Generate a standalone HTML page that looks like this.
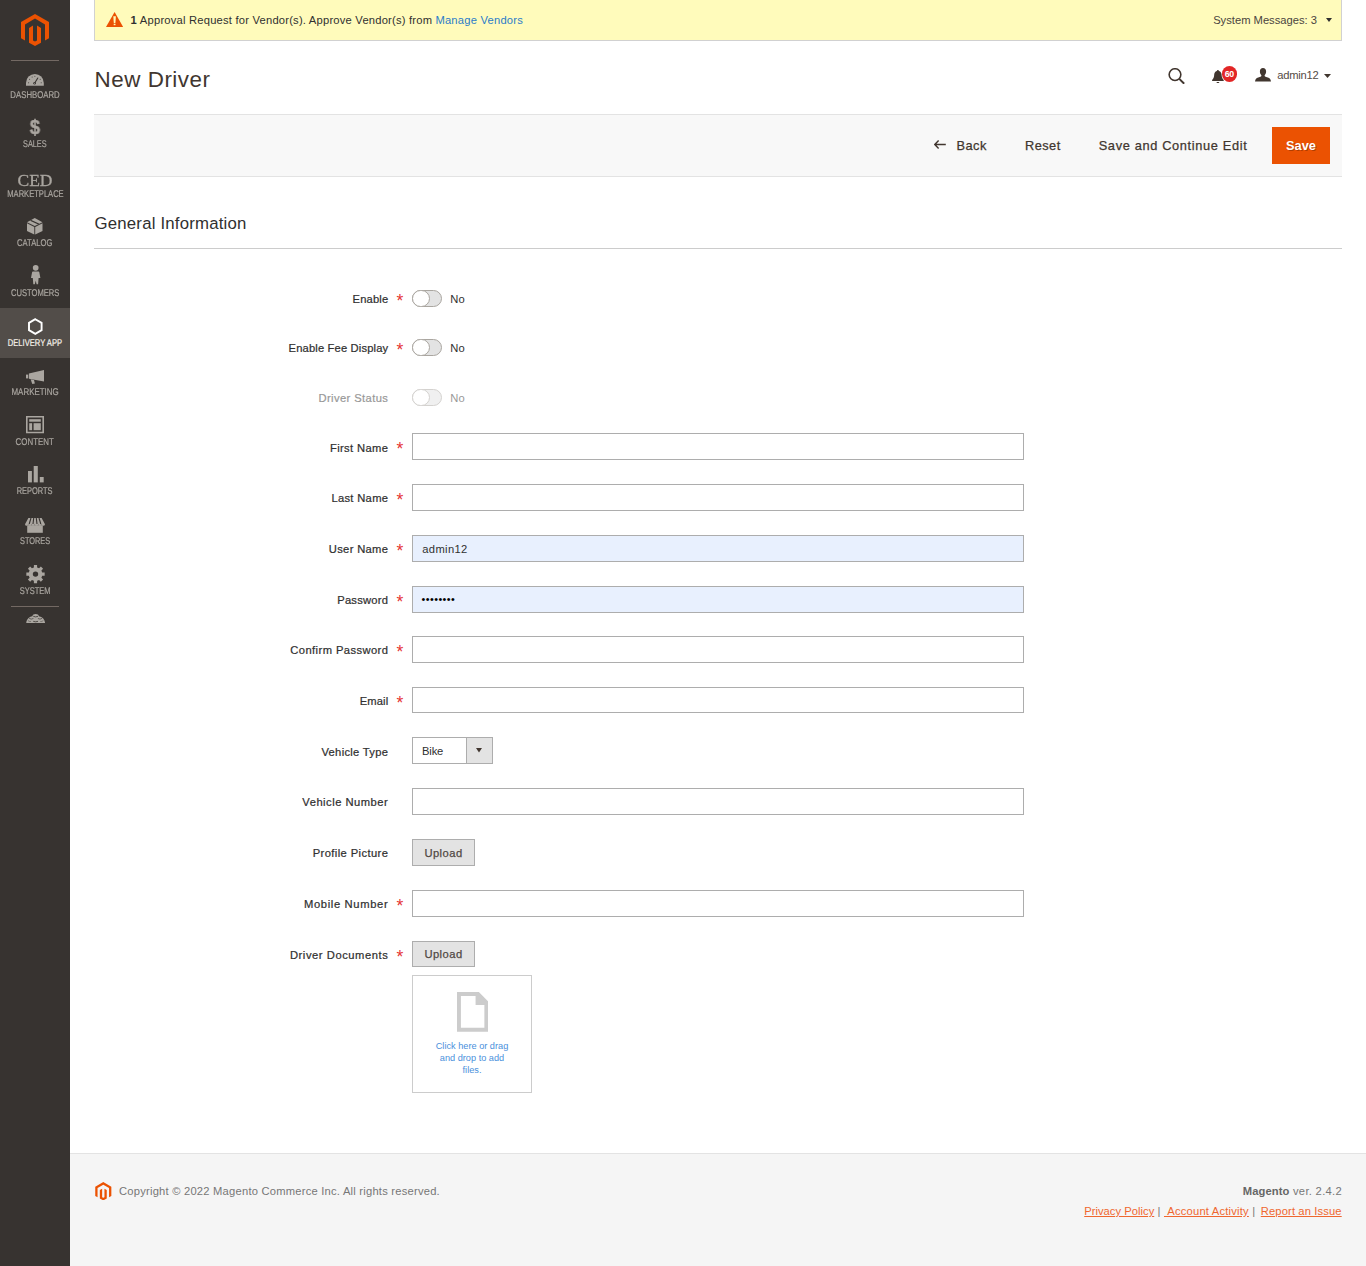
<!DOCTYPE html>
<html lang="en">
<head>
<meta charset="utf-8">
<title>New Driver / Magento Admin</title>
<style>
*{box-sizing:border-box;margin:0;padding:0}
html,body{width:1366px;height:1266px;overflow:hidden;background:#fff}
body{font-family:"Liberation Sans",sans-serif;font-size:11.2px;color:#303030;position:relative}
a{text-decoration:none;color:inherit}
.abs{position:absolute}
.t{position:absolute;white-space:nowrap;line-height:1}

/* ---------- sidebar ---------- */
#side{position:absolute;left:0;top:0;width:70px;height:1266px;background:#373330}
#side .sep{position:absolute;left:11px;width:48px;height:1px;background:#736963}
#side .item{position:absolute;left:0;width:70px;height:49.6px;color:#aaa6a0}
#side .item.active{background:#524d49;color:#f7f3eb}
#side .item svg{position:absolute;overflow:visible}
#side .lbl{position:absolute;left:-15px;width:100px;text-align:center;font-size:9.8px;line-height:10px;letter-spacing:0;white-space:nowrap;top:30.1px;-webkit-text-stroke:.2px currentColor}
#side .item:not(.active) .lbl{will-change:transform}
#side .lbl span{display:inline-block;transform-origin:50% 85%}

/* ---------- message bar ---------- */
#msg{position:absolute;left:94px;top:-1px;width:1248px;height:42px;background:#fffbbb;border:1px solid #d1d1d1}

/* ---------- header ---------- */
#title{left:94.6px;top:67px;font-size:22.4px;line-height:26px;color:#41362f;letter-spacing:.52px}

/* ---------- action bar ---------- */
#actions{position:absolute;left:94px;top:114px;width:1248px;height:63px;background:#f8f8f8;border-top:1px solid #e3e3e3;border-bottom:1px solid #e3e3e3}
.btn{position:absolute;font-size:12.8px;line-height:15px;color:#41362f;white-space:nowrap;-webkit-text-stroke:.25px currentColor}
#save{position:absolute;left:1272px;top:127.3px;width:58px;height:36.6px;background:#eb5202}
#save span{position:absolute;left:0;width:58px;text-align:center;top:10.5px;font-size:12.8px;line-height:15px;color:#fff;font-weight:bold;text-shadow:1px 1px 0 rgba(0,0,0,.25)}

/* ---------- section ---------- */
#sect{left:94.5px;top:214px;font-size:16.8px;line-height:20px;color:#303030;letter-spacing:.2px}
#sectline{position:absolute;left:94px;top:248px;width:1248px;height:1px;background:#ccc}

/* ---------- form ---------- */
.lab{position:absolute;right:978px;white-space:nowrap;font-size:11.2px;line-height:14px;color:#303030;-webkit-text-stroke:.22px currentColor;margin-right:-.3px}
.req{position:absolute;left:396.4px;font-size:17.5px;line-height:14px;height:14px;color:#e53434;margin-top:-.5px}
.inp{position:absolute;left:412px;width:612px;height:27px;border:1px solid #adadad;background:#fff}
.inp.fill{background:#e8f0fe}
.inp span{position:absolute;left:9.3px;top:6.5px;font-size:11.2px;line-height:14px;color:#303030;letter-spacing:.35px}
.tog{position:absolute;left:412px;width:30px;height:17px;border-radius:9px;background:#e3e3e3;border:1px solid #aaa6a0}
.tog i{position:absolute;left:-1px;top:-1px;width:18px;height:17px;border-radius:8.5px;background:#fff;border:1px solid #aaa6a0}
.no{position:absolute;left:450.2px;font-size:11.2px;line-height:14px;color:#303030;letter-spacing:.3px}
.dis{opacity:.5}
.upl{position:absolute;left:412px;width:63px;height:27px;background:#e3e3e3;border:1px solid #adadad}
.upl span{position:absolute;left:0;width:61px;text-align:center;top:6px;font-size:11.2px;line-height:14px;color:#514943;-webkit-text-stroke:.25px currentColor;letter-spacing:.45px}


.sel{position:absolute;left:412px;width:81px;height:27px;border:1px solid #adadad;background:#fff}
.sel span{position:absolute;left:9px;top:6.1px;font-size:11.2px;line-height:14px;color:#303030;letter-spacing:-.15px}
.sel b{position:absolute;right:0;top:0;width:26.5px;height:25px;background:#e3e3e3;border-left:1px solid #adadad}
.sel svg{position:absolute;left:62.6px;top:10.3px}
.inp span.pw{letter-spacing:.44px;font-size:10.8px;color:#000;left:8.5px;margin-top:-1.4px}
#drop{position:absolute;left:412px;top:975px;width:120px;height:118px;border:1px solid #ccc;background:#fff}
#droptxt{position:absolute;left:0;width:118px;top:64px;text-align:center;font-size:9.2px;line-height:12px;color:#4a90dc;letter-spacing:0}
/* ---------- footer ---------- */
#links a{color:#ef672f;text-decoration:underline}
#foot{position:absolute;left:70px;top:1153px;width:1296px;height:113px;background:#f5f5f5;border-top:1px solid #e3e3e3}
</style>
</head>
<body>

<div id="side">
  <svg class="abs" style="left:21px;top:14px" width="28" height="32" viewBox="0 0 28 32"><path fill="#eb5202" d="M14 0 0 8.1v16.1l4 2.3V10.4l10-5.8 10 5.8v16.1l4-2.3V8.1z"/><path fill="#eb5202" d="M16 26.400l-2 1.200-2-1.200V11.600l-4 2.300v14.800L14 32l6-3.300V13.900l-4-2.300z"/></svg>
  <div class="sep" style="top:60px"></div>

  <div class="item" style="top:60px">
    <svg style="left:26px;top:14px" width="18" height="12" viewBox="0 0 18 12"><path fill="#aaa6a0" d="M0 11.8V8.9a8.9 8.9 0 0 1 17.800 0v2.900z"/><path d="M8.600 9.300 11.800 4" stroke="#373330" stroke-width="1.100" stroke-linecap="round"/><circle cx="8.600" cy="9.300" r="1.300" fill="#373330"/><circle cx="8.600" cy="9.300" r=".5" fill="#aaa6a0"/><g fill="#373330"><circle cx="2.600" cy="8.700" r=".5"/><circle cx="3.600" cy="5.300" r=".5"/><circle cx="6.100" cy="3" r=".5"/><circle cx="8.900" cy="2.200" r=".5"/><circle cx="14.200" cy="5.300" r=".5"/><circle cx="15.200" cy="8.700" r=".5"/></g></svg>
    <div class="lbl"><span id="l0" style="transform:scaleX(0.795) rotate(.03deg)">DASHBOARD</span></div>
  </div>
  <div class="item" style="top:109.6px">
    <div class="abs" style="left:0;width:70px;top:6.500px;text-align:center;font-size:20.4px;line-height:22px;font-weight:bold;color:#aaa6a0;transform:scaleX(.9);-webkit-text-stroke:.5px #aaa6a0;will-change:transform" id="dollar">$</div>
    <div class="lbl" style="margin-top:-1px"><span id="l1" style="transform:scaleX(0.747) rotate(.03deg)">SALES</span></div>
  </div>
  <div class="item" style="top:159.2px">
    <div class="abs" style="left:0;width:70px;top:10.500px;text-align:center;font-family:'Liberation Serif',serif;font-size:17.500px;line-height:20px;color:#aaa6a0;will-change:transform;-webkit-text-stroke:.3px #aaa6a0" id="ced">CED</div>
    <div class="lbl"><span id="l2" style="transform:scaleX(0.773) rotate(.03deg)">MARKETPLACE</span></div>
  </div>
  <div class="item" style="top:208.8px">
    <svg style="left:27.300px;top:8.800px" width="15.500" height="16.600" viewBox="0 0 15.500 16.600"><g fill="#aaa6a0"><path d="M7.750 0 15.500 4.300 7.750 8 0 4.300z"/><path d="M0 5.300 7.300 8.900V16.600L0 12.900z"/><path d="M8.200 8.900 15.500 5.300V12.900L8.200 16.600z"/></g><path d="M3 2.650 4.300 1.900 12.500 5.750 11.200 6.500z" fill="#373330"/></svg>
    <div class="lbl" style="margin-top:-1px"><span id="l3" style="transform:scaleX(0.778) rotate(.03deg)">CATALOG</span></div>
  </div>
  <div class="item" style="top:258.4px">
    <svg style="left:31px;top:6.400px" width="9.400" height="19.400" viewBox="0 0 9.400 19.400"><g fill="#aaa6a0"><circle cx="4.700" cy="2.850" r="2.850"/><path d="M1.900 6.500h5.600q.7 0 .8.700L9.400 12.900H7.600L7.100 19.300H5.600L4.700 15.700 3.800 19.300H2.300L1.800 12.900H0L1.100 7.200q.1-.7.800-.7z"/></g></svg>
    <div class="lbl"><span id="l4" style="transform:scaleX(0.775) rotate(.03deg)">CUSTOMERS</span></div>
  </div>
  <div class="item active" style="top:308px">
    <svg style="left:28px;top:9.800px" width="14.600" height="17" viewBox="0 0 14.600 17"><path d="M7.300 1.200 13.600 4.850V12.150L7.300 15.800 1 12.150V4.850z" fill="none" stroke="#fff" stroke-width="1.900" stroke-linejoin="miter"/></svg>
    <div class="lbl"><span id="l5" style="transform:scaleX(0.777) rotate(.03deg)">DELIVERY APP</span></div>
  </div>
  <div class="item" style="top:357.6px">
    <svg style="left:26.300px;top:12.200px" width="18" height="14" viewBox="0 0 18 14"><g fill="#aaa6a0"><path d="M2.900 3.500 18 0V11.600L2.900 8.800z"/><path d="M0 4.600h2.200v3.800H0z"/><path d="M4.600 9.200 8 9.900 8.900 13.600 6.300 14z"/></g></svg>
    <div class="lbl" style="margin-top:-1px"><span id="l6" style="transform:scaleX(0.811) rotate(.03deg)">MARKETING</span></div>
  </div>
  <div class="item" style="top:407.2px">
    <svg style="left:26.300px;top:9px" width="18" height="17.300" viewBox="0 0 18 17.300"><path d="M.8 .8h16.400v15.700H.8z" fill="none" stroke="#aaa6a0" stroke-width="1.600"/><g fill="#aaa6a0"><path d="M3.200 3.200h11.600v2.500H3.200z"/><path d="M3.200 7.200h2.900v7H3.200z"/><path d="M7.600 7.200h7.200v7H7.600z"/></g></svg>
    <div class="lbl"><span id="l7" style="transform:scaleX(0.805) rotate(.03deg)">CONTENT</span></div>
  </div>
  <div class="item" style="top:456.8px">
    <svg style="left:27.500px;top:9.200px" width="16" height="16.400" viewBox="0 0 16 16.400"><g fill="#aaa6a0"><path d="M0 5h3.900v11.400H0z"/><path d="M5.700 0h4.100v16.400H5.700z"/><path d="M11.800 11h3.900v5.400h-3.900z"/></g></svg>
    <div class="lbl" style="margin-top:-1px"><span id="l8" style="transform:scaleX(0.76) rotate(.03deg)">REPORTS</span></div>
  </div>
  <div class="item" style="top:506.4px">
    <svg style="left:24.900px;top:11.600px" width="20" height="15" viewBox="0 0 20 15"><g fill="#aaa6a0"><path d="M3.400 0h13.200L20 6.200q-.2 1.600-1.700 1.600-1.400 0-1.700-1.500-.3 1.500-1.700 1.500t-1.700-1.500q-.3 1.500-1.700 1.500T9.800 6.300Q9.500 7.800 8.100 7.800T6.400 6.300Q6.100 7.800 4.700 7.800 3.300 7.800 3.100 6.300 2.800 7.800 1.600 7.800.2 7.800 0 6.200z"/><path d="M2.200 7.200h15.600V14.800H2.200z"/></g><g stroke="#373330" stroke-width="1.100"><path d="M6 0 4.200 6M8.700 0 8 6M11.300 0 12 6M14 0 15.800 6"/></g></svg>
    <div class="lbl"><span id="l9" style="transform:scaleX(0.752) rotate(.03deg)">STORES</span></div>
  </div>
  <div class="item" style="top:556px">
    <svg style="left:25.800px;top:8.800px" width="19" height="18.200" viewBox="0 0 19 18.200"><path fill="#aaa6a0" fill-rule="evenodd" d="M7.860 2.400 7.930-.07H11.070L11.140 2.400 13.080 3.200 14.870 1.510 17.090 3.730 15.400 5.520 16.200 7.460 18.670 7.530V10.670L16.200 10.740 15.400 12.680 17.090 14.470 14.870 16.690 13.080 15 11.140 15.800 11.070 18.270H7.930L7.860 15.800 5.920 15 4.130 16.690 1.910 14.470 3.600 12.680 2.800 10.740.33 10.670V7.530L2.800 7.460 3.600 5.520 1.910 3.730 4.130 1.510 5.920 3.200zM6.800 9.100a2.700 2.700 0 1 0 5.400 0 2.700 2.700 0 1 0-5.400 0z"/></svg>
    <div class="lbl"><span id="l10" style="transform:scaleX(0.765) rotate(.03deg)">SYSTEM</span></div>
  </div>
  <div class="sep" style="top:606px"></div>
  <svg class="abs" style="left:25.700px;top:613.600px" width="19.300" height="9.700" viewBox="0 0 19.300 9.700"><path fill="#aaa6a0" d="M.2 9.700C.2 5.800 2.600 3 6.400 2.300 6.600.9 7.800 0 9.650 0s3.050.9 3.250 2.300C16.700 3 19.100 5.800 19.100 9.700z"/><g fill="none" stroke="#373330" stroke-width=".65" stroke-linecap="round"><path d="M7.600 2.500Q9.650 3.500 11.700 2.500" stroke-width=".8"/><path d="M3.400 4.500Q5.200 5.900 7.100 4.700"/><path d="M15.900 4.500Q14.100 5.900 12.200 4.700"/><path d="M7.600 7.500Q9.650 8.300 11.700 7.500" stroke-width=".8"/><path d="M2.200 6.800Q3.300 7.800 4.600 7.600" stroke-width=".45"/><path d="M17.100 6.800Q16 7.800 14.700 7.600" stroke-width=".45"/></g></svg>
</div>

<div id="msg">
  <svg class="abs" style="left:10.900px;top:11.900px" width="17.200" height="15" viewBox="0 0 17.200 15"><path d="M8.600 0 17.200 15H0z" fill="#eb5202"/><path d="M7.300 4.300h2.600l-.5 6.600H7.800z" fill="#fffbbb"/><path d="M7.700 11.700h1.800v1.500H7.700z" fill="#fffbbb"/></svg>
  <div class="t" id="m1" style="left:35.500px;top:12.500px;font-size:11.200px;line-height:14px;color:#303030"><b>1</b> <span id="m2" style="letter-spacing:.21px">Approval Request for Vendor(s). Approve Vendor(s) from</span> <a id="m3" style="color:#2b7cc9;letter-spacing:.22px">Manage Vendors</a></div>
  <div class="t" id="sysm" style="right:24px;top:12.500px;font-size:11.200px;line-height:14px;color:#4a4440;letter-spacing:0">System Messages: 3</div>
  <svg class="abs" style="left:1231px;top:18px" width="6" height="4" viewBox="0 0 6 4"><path d="M0 0h6L3 4z" fill="#303030"/></svg>
</div>

<div id="title" class="t">New Driver</div>


<svg class="abs" id="isearch" style="left:1167.500px;top:67.600px" width="17" height="16.500" viewBox="0 0 17 16.500"><circle cx="7" cy="6.600" r="5.850" fill="none" stroke="#41362f" stroke-width="1.600"/><path d="M11.300 10.900 16.200 15.700" stroke="#41362f" stroke-width="2" stroke-linecap="butt"/></svg>
<svg class="abs" id="ibell" style="left:1212px;top:70px" width="12" height="13.200" viewBox="0 0 12 13.200"><path fill="#41362f" d="M5.900 0C6.500 0 6.900.3 7 .9 8.800 1.500 9.500 3 9.600 4.600 9.700 7 10.100 8.600 11.700 10V10.900H.1V10C1.700 8.600 2.100 7 2.200 4.600 2.300 3 3 1.500 4.800.9 4.900.3 5.300 0 5.900 0zM4.400 12h3q-.4 1.100-1.500 1.100T4.400 12z"/></svg>
<div class="abs" id="badge" style="left:1221.500px;top:66.200px;width:15.600px;height:15.600px;border-radius:50%;background:#e22626;color:#fff;font-size:8.800px;line-height:17px;text-align:center;font-weight:bold;letter-spacing:-.35px">60</div>
<svg class="abs" id="iuser" style="left:1255px;top:68.200px" width="16" height="13.500" viewBox="0 0 16 13.500"><path fill="#41362f" d="M8 0c2 0 3.100 1.500 3.100 3.400 0 1.500-.5 2.700-1.300 3.500-.3.300-.3 1 0 1.300.3.400 1 .7 2.200 1.100 2.300.7 3.700 1.500 4 4.200H0c.3-2.700 1.700-3.500 4-4.200 1.200-.4 1.900-.7 2.200-1.100.3-.3.300-1 0-1.300C5.400 6.100 4.900 4.900 4.900 3.400 4.900 1.500 6 0 8 0z"/></svg>
<div class="t" id="huser" style="left:1277.300px;top:68px;font-size:11.200px;line-height:14px;color:#554b44;letter-spacing:-.25px">admin12</div>
<svg class="abs" style="left:1324.200px;top:74px" width="7" height="4" viewBox="0 0 7 4"><path d="M0 0h7L3.500 4z" fill="#41362f"/></svg>
<div id="actions"></div>
<svg class="abs" style="left:934.400px;top:140.300px" width="12" height="9" viewBox="0 0 12 9"><path d="M4.600 .6.800 4.500l3.800 3.900M1 4.500h10.800" fill="none" stroke="#41362f" stroke-width="1.400"/></svg>
<div class="btn" id="bback" style="left:956.500px;top:137.500px;letter-spacing:.45px">Back</div>
<div class="btn" id="breset" style="left:1025px;top:137.500px;letter-spacing:.45px">Reset</div>
<div class="btn" id="bsce" style="left:1098.700px;top:137.500px;letter-spacing:.65px">Save and Continue Edit</div>
<div id="save"><span><em id="savet" style="font-style:normal">Save</em></span></div>

<div id="sect" class="t">General Information</div>
<div id="sectline"></div>


<div id="form">
<div class="lab" style="top:292px;letter-spacing:0.15px">Enable</div><div class="req" style="top:294px">*</div>
<div class="tog" style="top:290px"><i></i></div><div class="no" style="top:292px">No</div>
<div class="lab" style="top:341px;letter-spacing:0.15px">Enable Fee Display</div><div class="req" style="top:343.3px">*</div>
<div class="tog" style="top:339.3px"><i></i></div><div class="no" style="top:341px">No</div>
<div class="lab dis" style="top:391px;letter-spacing:0.4px">Driver Status</div>
<div class="tog dis" style="top:389.2px"><i></i></div><div class="no dis" style="top:391px">No</div>
<div class="lab" style="top:441px;letter-spacing:0.36px">First Name</div><div class="req" style="top:442px">*</div>
<div class="inp" style="top:433px;height:27px"></div>
<div class="lab" style="top:491px;letter-spacing:0.31px">Last Name</div><div class="req" style="top:493px">*</div>
<div class="inp" style="top:484px;height:27px"></div>
<div class="lab" style="top:542px;letter-spacing:0.33px">User Name</div><div class="req" style="top:544px">*</div>
<div class="inp fill" style="top:535px;height:27px"><span style="top:6px">admin12</span></div>
<div class="lab" style="top:593px;letter-spacing:0.25px">Password</div><div class="req" style="top:595px">*</div>
<div class="inp fill" style="top:586px;height:27px"><span class="pw" style="top:6px">••••••••</span></div>
<div class="lab" style="top:643px;letter-spacing:0.41px">Confirm Password</div><div class="req" style="top:645px">*</div>
<div class="inp" style="top:636px;height:27px"></div>
<div class="lab" style="top:694px;letter-spacing:0.13px">Email</div><div class="req" style="top:696px">*</div>
<div class="inp" style="top:687px;height:26px"></div>
<div class="lab" style="top:745px;letter-spacing:0.3px">Vehicle Type</div>
<div class="sel" style="top:737px"><span style="top:6px">Bike</span><b></b><svg width="6" height="4.500" viewBox="0 0 6 4.500"><path d="M0 0h6L3 4.500z" fill="#41362f"/></svg></div>
<div class="lab" style="top:795px;letter-spacing:0.5px">Vehicle Number</div>
<div class="inp" style="top:788px;height:27px"></div>
<div class="lab" style="top:846px;letter-spacing:0.4px">Profile Picture</div>
<div class="upl" style="top:839px;height:27px"><span style="top:6px">Upload</span></div>
<div class="lab" style="top:897px;letter-spacing:0.65px">Mobile Number</div><div class="req" style="top:899px">*</div>
<div class="inp" style="top:890px;height:27px"></div>
<div class="lab" style="top:948px;letter-spacing:0.55px">Driver Documents</div><div class="req" style="top:950px">*</div>
<div class="upl" style="top:941px;height:26px"><span style="top:5px">Upload</span></div>
<div id="drop"><svg class="abs" style="left:43.700px;top:16px" width="31.3" height="39.8" viewBox="0 0 32 40" preserveAspectRatio="none"><path d="M2 2h19.500L30 10.500V38H2z" fill="none" stroke="#ccc" stroke-width="4" stroke-linejoin="miter"/><path d="M19 2h2.500L30 10.500V13H19z" fill="#ccc"/></svg>
<div id="droptxt">Click here or drag<br>and drop to add<br>files.</div></div>
</div>
<div id="foot">
  <svg class="abs" style="left:25px;top:28px" width="16.600" height="18.400" viewBox="0 0 28 32"><path fill="#eb5202" d="M14 0 0 8.100v16.100l4 2.300V10.400l10-5.800 10 5.800v16.100l4-2.300V8.100z"/><path fill="#eb5202" d="M16 26.400l-2 1.200-2-1.200V11.600l-4 2.300v14.800L14 32l6-3.300V13.900l-4-2.300z"/></svg>
  <div class="t" id="copy" style="left:49px;top:30px;font-size:11.200px;line-height:14px;color:#777;letter-spacing:.22px">Copyright © 2022 Magento Commerce Inc. All rights reserved.</div>
  <div class="t" id="ver" style="right:24px;top:30px;font-size:11.200px;line-height:14px;color:#777;letter-spacing:.3px"><b style="color:#666;letter-spacing:.1px">Magento</b> ver. 2.4.2</div>
  <div class="t" id="links" style="right:24.3px;top:50.200px;font-size:11.200px;line-height:14px;color:#777;letter-spacing:.2px"><a id="fl1" style="letter-spacing:.03px">Privacy Policy</a> | <a id="fl2">&nbsp;Account Activity</a> | <a id="fl3" style="letter-spacing:.13px;margin-left:2.2px">Report an Issue</a></div>
</div>

</body>
</html>
